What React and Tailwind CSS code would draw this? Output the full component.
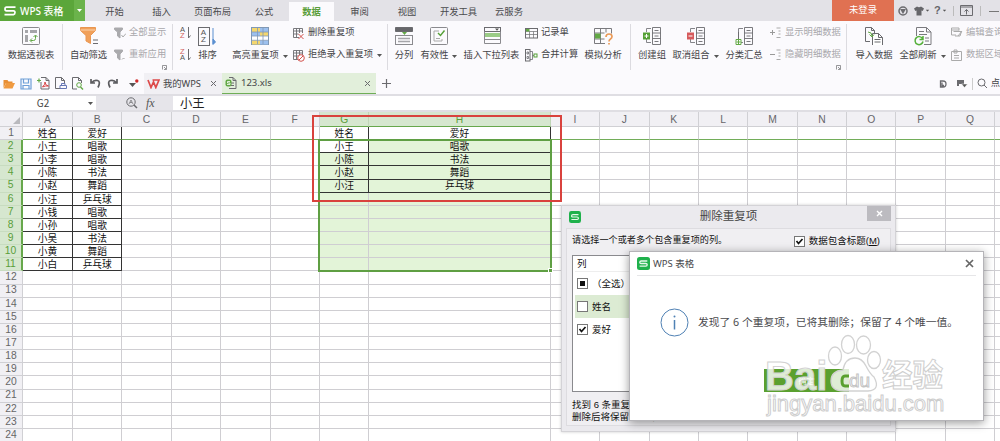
import clsx from "clsx";

const tabs = [
  { name: "开始", width: "w-[59px]" },
  { name: "插入", width: "w-[35px]" },
  { name: "页面布局", width: "w-[67px]" },
  { name: "公式", width: "w-[36px]" },
  { name: "数据", width: "ml-[7px] w-[45px]", active: true },
  { name: "审阅", width: "w-[51px]" },
  { name: "视图", width: "w-[44px]" },
  { name: "开发工具", width: "w-[59px]" },
  { name: "云服务", width: "w-[42px]" },
];

// The last column is only a sliver at the window's edge, so it has no letter
const columns = [..."ABCDEFGHIJKLMNOPQ".split(""), ""];
const rowCount = 24;

const people = [
  ["姓名", "爱好"],
  ["小王", "唱歌"],
  ["小李", "唱歌"],
  ["小陈", "书法"],
  ["小赵", "舞蹈"],
  ["小汪", "乒乓球"],
  ["小钱", "唱歌"],
  ["小孙", "唱歌"],
  ["小吴", "书法"],
  ["小黄", "舞蹈"],
  ["小白", "乒乓球"],
];

const uniquePeople = [
  ["姓名", "爱好"],
  ["小王", "唱歌"],
  ["小陈", "书法"],
  ["小赵", "舞蹈"],
  ["小汪", "乒乓球"],
];

function Svg({ w = 20, h = 20, className, children }) {
  return (
    <svg
      width={w}
      height={h}
      viewBox={`0 0 ${w} ${h}`}
      fill="none"
      stroke="#6b6b6f"
      className={clsx("shrink-0", className)}
    >
      {children}
    </svg>
  );
}

function WpsLogo({ size = 13 }) {
  return (
    <svg width={size} height={size} viewBox="0 0 13 13" className="shrink-0">
      <rect width="13" height="13" rx="2.5" fill="#1fb14c" />
      <path
        d="M10.3 4H4.2Q2.8 4 2.8 5.3T4.2 6.5H8.8Q10.2 6.5 10.2 7.8T8.8 9.2H2.6"
        fill="none"
        stroke="#e6f8ea"
        strokeWidth="1.3"
      />
    </svg>
  );
}

function Caret({ className }) {
  return (
    <svg width="5" height="3" viewBox="0 0 5 3" className={clsx("shrink-0", className)}>
      <path d="M0 0H5L2.5 3Z" fill="#555" />
    </svg>
  );
}

function PivotIcon() {
  return (
    <Svg>
      <rect x="1.5" y="1.5" width="17" height="17" rx="1" stroke="#8a8a8e" />
      <path d="M4 4h3v3H4zM9 4h7v3H9zM4 9h3v7H4z" fill="#a5a5a9" stroke="none" />
      <path d="M9.500 14.500h3q2 0 2-2V9.500M12.500 11l2-2 2 2M11 12.500l-2 2 2 2" stroke="#62a845" />
    </Svg>
  );
}

function FilterIcon() {
  return (
    <Svg>
      <path d="M1.500 1.500h15v3l-5 5v8L7 15V9.500L1.500 4.500Z" fill="#f1a05a" stroke="#e99650" />
      <path d="M1.500 4h15" stroke="#fbd4ae" />
      <path d="M14 14h5M14 17.500h5" strokeWidth="1.200" />
    </Svg>
  );
}

function SmallFilterIcon({ reapply }) {
  return (
    <Svg w={12} h={12}>
      <path d="M.5 1h8v1.500L6 5v6L3.500 9V5L.5 2.500Z" fill="#aaaaad" stroke="#aaaaad" />
      {reapply ? (
        <path d="M8 10.500l1.500-1.500 1 1" stroke="#aaa" />
      ) : (
        <path d="M7.500 8l1.500 2 3-3.500" stroke="#aaa" />
      )}
    </Svg>
  );
}

function SortIcon({ descending }) {
  return (
    <span className="flex h-4 w-[14px] items-center">
      <span className="flex flex-col text-[7.500px] leading-[6.500px]">
        <span className={descending ? "text-[#d2605c]" : "text-[#555]"}>{descending ? "Z" : "A"}</span>
        <span className={descending ? "text-[#555]" : "text-[#d2605c]"}>{descending ? "A" : "Z"}</span>
      </span>
      <Svg w={6} h={12}>
        <path d="M3.500 0v11M3.500 11l2-2.500" />
      </Svg>
    </span>
  );
}

function BigSortIcon() {
  return (
    <span className="flex h-5 w-5 items-center">
      <span className="flex h-[19px] w-3 flex-col items-center justify-center border border-[#6b6b6f] text-[8px] leading-[7.500px] text-[#555]">
        <span>A</span>
        <span>Z</span>
      </span>
      <Svg w={6} h={19}>
        <path d="M3 1v16M3 17.500V12l2.500 3Z" stroke="#5a8fd0" fill="#5a8fd0" />
      </Svg>
    </span>
  );
}

function HighlightIcon() {
  return (
    <Svg>
      <rect x="1.500" y="1.500" width="17" height="17" fill="#fff" stroke="#8098b5" />
      <path d="M2 2h8v4H2zM2 14.500h8v4H2zM10 6h8v4h-8z" fill="#f5d76e" stroke="none" />
      <path d="M2 6h8v4H2zM10 2h8v4h-8zM10 14.500h8v4h-8z" fill="#9cc0ee" stroke="none" />
      <path d="M2 6h16M2 10h16M2 14.300h16M7.500 2v16M13 2v16" stroke="#8098b5" strokeWidth=".8" />
    </Svg>
  );
}

function SmallTableIcon({ mark }) {
  return (
    <Svg w={13} h={13}>
      <path d="M7 10.500H1.500V1.500h9V6M1.500 4h9M1.500 7h5M4.500 1.500v9M7.500 1.500V6" strokeWidth=".9" />
      {mark === "delete" && <path d="M6.500 7l5 5M11.500 7l-5 5" stroke="#d2524e" />}
      {mark === "reject" && (
        <>
          <circle cx="9" cy="9" r="3.300" stroke="#d2524e" fill="#fff" />
          <path d="M7 11l4-4" stroke="#d2524e" />
        </>
      )}
    </Svg>
  );
}

function SplitIcon() {
  return (
    <Svg>
      <path d="M1.500 1.500h17v4h-17z" fill="#66666a" />
      <path d="M8 6h5l-2.500 3Z" fill="#62a845" stroke="none" />
      <rect x="1.500" y="9.500" width="17" height="9" stroke="#8a8a8e" />
      <path d="M4 12.500h12M4 15.500h12" stroke="#a5a5a9" strokeWidth="1.500" />
    </Svg>
  );
}

function ValidIcon() {
  return (
    <Svg>
      <rect x="1.500" y="1.500" width="17" height="17" rx="1" stroke="#8a8a8e" />
      <path d="M10 5H5v10h8v-2M7 12.500h4" stroke="#aaa" />
      <path d="M9 7l2.500 2.500 4-5" stroke="#55a036" strokeWidth="1.400" />
    </Svg>
  );
}

function DropListIcon() {
  return (
    <Svg>
      <rect x="2.500" y="1.500" width="16" height="4" />
      <path d="M13 2.500h4l-2 2.300Z" fill="#555" stroke="none" />
      <path d="M2.500 5.500v12h16v-12M3 13.500h15" stroke="#8a8a8e" />
      <path d="M3 7h15v4H3z" fill="#9acb86" stroke="none" />
    </Svg>
  );
}

function RecordIcon() {
  return (
    <Svg w={13} h={11}>
      <rect x=".5" y=".5" width="12" height="9.500" />
      <path d="M1 3.500h11M1 6.500h11M4.500 3.500v6.500M8.500 3.500v6.500" strokeWidth=".7" />
      <path d="M1 1h3.500v2.500H1z" fill="#62a845" stroke="none" />
    </Svg>
  );
}

function MergeIcon() {
  return (
    <Svg w={13} h={13}>
      <rect x=".5" y=".5" width="4.500" height="11.500" />
      <path d="M2 3h1.500v2H2zM2 7.500h1.500v2H2zM5 2.500h2.500v8H5M7.500 6.500H9" strokeWidth=".8" />
      <rect x="9" y="5" width="3" height="3" stroke="#55a036" />
    </Svg>
  );
}

function WhatIfIcon() {
  return (
    <Svg>
      <path d="M12 17.500H1.500V2.500h17v5M1.500 7h10M1.500 13h10M7.500 2.500v15M13 2.500v4" stroke="#7a7a7e" />
      <path d="M2 7.500h5.500v5H2z" fill="#62a845" stroke="none" />
      <path d="M13 11q0-3 3-3t3 2.500q0 1.500-1.500 2.500t-1.500 2.500M16 17v1.500" stroke="#ea9a58" strokeWidth="1.700" />
    </Svg>
  );
}

function GroupIcon({ kind }) {
  return (
    <Svg>
      <path d="M10.500 1.500h8v17h-8zM10.500 7h8M10.500 12.500h8M12.500 4.500h4M12.500 10h4M12.500 15.500h4" strokeWidth=".9" />
      <path d="M9 2.500H4.500V6M9 16.500H4.500V13" stroke="#85858a" />
      {kind === "add" && (
        <>
          <path d="M1 6.500h7v7H1z" fill="#55a036" stroke="none" />
          <path d="M4.500 8v4M2.500 10h4" stroke="#fff" />
        </>
      )}
      {kind === "remove" && (
        <>
          <path d="M1 6.500h7v7H1z" fill="#d65a5c" stroke="none" />
          <path d="M2.500 10h4" stroke="#fff" />
        </>
      )}
      {kind === "total" && (
        <>
          <path d="M4.500 6v7" />
          <path d="M2 13.500h5v5H2zM4.500 14v4M2.500 16h4" stroke="#62a845" fill="#fff" />
        </>
      )}
    </Svg>
  );
}

function DetailIcon({ plus }) {
  return (
    <Svg w={12} h={12}>
      <path d="M6.500 1h4M8.500 4h2M8.500 7h2M6.500 10.500h4" stroke="#aaa" />
      <path d={plus ? "M0 5.500h5M2.500 3v5" : "M0 5.500h5"} stroke="#999" />
    </Svg>
  );
}

function ImportIcon() {
  return (
    <Svg>
      <path d="M6 15.500H1.500V1.500h6l3 3V7M7.500 1.500v3h3" />
      <path d="M8.500 19V7.500h6l4 4V19M14.500 7.500v4h4M10.500 13.500h6M10.500 16h6" fill="#fff" />
      <path d="M4 6q4 0 4 4M5.500 8.500L8 11l2-2.500" stroke="#62a845" />
    </Svg>
  );
}

function RefreshIcon() {
  return (
    <Svg>
      <path d="M3.500 10V1.500h10l4.500 4.500v12.500h-7M13.500 1.500V6H18M6 5.500h5M6 8.500h8M12 12h4M12 15h4" stroke="#7a7a7e" />
      <path d="M9.500 12.500a4 4 0 1 0 .5 3M10 10v3.500H6.500" stroke="#55b03a" strokeWidth="1.500" />
    </Svg>
  );
}

function LauncherIcon({ className }) {
  return (
    <Svg w={5} h={5} className={className}>
      <path d="M.5 4.500V.5h4v4M2 2l2 2M2 4.500h2.500" strokeWidth=".7" />
    </Svg>
  );
}

function Tool({ icon, label, caret, className }) {
  return (
    <div className={clsx("flex shrink-0 flex-col items-center pt-[5px]", className)}>
      {icon}
      <div className="mt-1 flex h-3 items-center whitespace-nowrap">
        {label}
        {caret && <Caret className="ml-1" />}
      </div>
    </div>
  );
}

function SmallTool({ icon, label, caret, disabled }) {
  return (
    <div
      className={clsx(
        "flex h-3 items-center gap-[3px] whitespace-nowrap",
        disabled && "text-[#a9a8ac]"
      )}
    >
      {icon}
      <span>{label}</span>
      {caret && <Caret className="ml-px" />}
    </div>
  );
}

function ToolStack({ className, children }) {
  return (
    <div className={clsx("flex shrink-0 flex-col gap-[10px] pt-[6px]", className)}>{children}</div>
  );
}

function Group({ className, children }) {
  return (
    <div className={clsx("flex shrink-0 items-start", className)}>
      {children}
      <div className="ml-auto mt-[3px] h-[46px] w-px bg-[#dcdbe0]" />
    </div>
  );
}

function TitleBar() {
  return (
    <div className="flex h-[21px] bg-[#e3e2e7] text-[9.300px] text-[#4a4a4d]">
      <div className="flex w-[85px] shrink-0 items-center bg-[#5ba63a] text-white">
        <Svg w={12} h={10} className="ml-1">
          <path d="M11.500 1.200H2.500Q1 1.200 1 3t1.500 1.800H9.500Q11 4.800 11 6.600T9.500 8.600H.5" stroke="#fff" strokeWidth="1.700" />
        </Svg>
        <span className="ml-1 font-['Noto_Sans','Noto_Sans_CJK_SC',sans-serif] text-[10px] font-medium whitespace-nowrap">
          WPS 表格
        </span>
        <span className="ml-auto flex h-full w-[11px] items-center justify-center bg-[#6bb34b]">
          <svg width="5" height="3">
            <path d="M0 0H5L2.500 3Z" fill="#fff" />
          </svg>
        </span>
      </div>
      {tabs.map((tab) => (
        <div
          key={tab.name}
          className={clsx(
            "flex shrink-0 justify-center",
            tab.width,
            tab.active ? "mt-[2px] bg-[#fbfafd] pt-[6px] font-bold text-[#5a9e3a]" : "pt-[8px]"
          )}
        >
          {tab.name}
        </div>
      ))}
      <div className="ml-auto flex w-[62px] shrink-0 items-center justify-center bg-[#e07152] text-white">
        未登录
      </div>
      <div className="flex w-[106px] shrink-0 items-center pl-1">
        <Svg w={10} h={10}>
          <circle cx="5" cy="5" r="4" strokeWidth="1.500" />
          <path d="M2 3l6 0-3 5Z" fill="#6b6b6f" stroke="none" />
        </Svg>
        <Svg w={10} h={10} className="ml-[6px]">
          <path d="M0 2.500L3 .5q2 1.500 4 0l3 2-1.300 2.500-1.200-.5V9.500h-5V4.500L1.300 5Z" fill="#66666a" stroke="none" />
        </Svg>
        <Caret className="ml-px scale-75" />
        <span className="ml-[4px] text-[11px] font-bold text-[#66666a]">?</span>
        <Caret className="ml-px scale-75" />
        <span className="ml-[6px] h-[10px] w-px bg-[#bbb]" />
        <Svg w={13} h={11} className="ml-[6px]">
          <path d="M.5.5h12v10H.5zM.5 2h12M6.500 9.500V4.500M4.500 6.500l2-2 2 2" />
        </Svg>
        <span className="ml-[7px] h-[10px] w-px bg-[#bbb]" />
        <span className="ml-[8px] mt-[2px] h-px w-[10px] bg-[#777]" />
      </div>
    </div>
  );
}

function Ribbon() {
  return (
    <div className="flex h-[52px] overflow-hidden bg-[#fbfafd] text-[9.300px] text-[#444447]">
      <Group className="w-[63px]">
        <Tool className="w-[62px]" icon={<PivotIcon />} label="数据透视表" />
      </Group>
      <Group className="w-[110px]">
        <Tool className="w-[51px]" icon={<FilterIcon />} label="自动筛选" />
        <ToolStack>
          <SmallTool disabled icon={<SmallFilterIcon />} label="全部显示" />
          <SmallTool disabled icon={<SmallFilterIcon reapply />} label="重新应用" />
          <LauncherIcon className="-mt-[6px] ml-[48px]" />
        </ToolStack>
      </Group>
      <Group className="w-[215px]">
        <div className="flex w-5 shrink-0 flex-col gap-[6px] pt-[4px] pl-[7px]">
          <SortIcon />
          <SortIcon descending />
        </div>
        <Tool className="w-[29px]" icon={<BigSortIcon />} label="排序" />
        <Tool className="ml-[10px] w-[56px]" icon={<HighlightIcon />} label="高亮重复项" caret />
        <ToolStack className="ml-[4px]">
          <SmallTool icon={<SmallTableIcon mark="delete" />} label="删除重复项" />
          <SmallTool icon={<SmallTableIcon mark="reject" />} label="拒绝录入重复项" caret />
        </ToolStack>
      </Group>
      <Group className="w-[243px]">
        <Tool className="w-[32px]" icon={<SplitIcon />} label="分列" />
        <Tool className="w-[38px]" icon={<ValidIcon />} label="有效性" caret />
        <Tool className="ml-[5px] w-[57px]" icon={<DropListIcon />} label="插入下拉列表" />
        <ToolStack className="ml-[5px]">
          <SmallTool icon={<RecordIcon />} label="记录单" />
          <SmallTool icon={<MergeIcon />} label="合并计算" />
        </ToolStack>
        <Tool className="ml-[5px] w-[40px]" icon={<WhatIfIcon />} label="模拟分析" />
      </Group>
      <Group className="w-[216px]">
        <Tool className="ml-[4px] w-[34px]" icon={<GroupIcon kind="add" />} label="创建组" />
        <Tool className="ml-[3px] w-[47px]" icon={<GroupIcon kind="remove" />} label="取消组合" caret />
        <Tool className="ml-[4px] w-[42px]" icon={<GroupIcon kind="total" />} label="分类汇总" />
        <ToolStack className="ml-[5px]">
          <SmallTool disabled icon={<DetailIcon plus />} label="显示明细数据" />
          <SmallTool disabled icon={<DetailIcon />} label="隐藏明细数据" />
          <LauncherIcon className="-mt-[6px] ml-[66px]" />
        </ToolStack>
      </Group>
      <Tool className="ml-[4px] w-[46px]" icon={<ImportIcon />} label="导入数据" />
      <Tool className="ml-[2px] w-[47px]" icon={<RefreshIcon />} label="全部刷新" caret />
      <ToolStack className="ml-[4px]">
        <SmallTool
          disabled
          icon={
            <Svg w={13} h={12}>
              <path d="M9 3.500V1H1.500v7H6M1.500 3h7.500M3.500 4.500h8L10 9H5M8 9l4-5" stroke="#aaa" />
            </Svg>
          }
          label="编辑查询"
        />
        <SmallTool
          disabled
          icon={
            <Svg w={13} h={12}>
              <path d="M1.500 2.500h10v9h-10zM4 1h3v3H4zM4 6.500h5M4 9h5" stroke="#aaa" />
            </Svg>
          }
          label="数据区域"
        />
      </ToolStack>
    </div>
  );
}

function DocumentBar() {
  return (
    <div className="flex h-[21px] items-center bg-[#fbfafd] text-[9.300px] text-[#444447]">
      <div className="flex w-[144px] shrink-0 items-center gap-[5px] pl-[3px]">
        <Svg w={12} h={12}>
          <path d="M.5 10V2h4l1 1.500h4V5H3Z" fill="#e88f35" stroke="none" />
          <path d="M.5 10.500L3 5h9l-2.500 5.500Z" fill="#f09a40" stroke="none" />
        </Svg>
        <Svg w={12} h={12}>
          <path d="M1 1h10v10H1zM3.500 1v4h5V1M3 11V7.500h6V11" stroke="#6f9fd8" strokeWidth="1.200" />
        </Svg>
        <Svg w={13} h={13}>
          <path d="M4 .5h5l3 3v8.500H4V5M9 .5v3h3" />
          <path d="M5.500 10q3-3 2.500-5 0 3.500 3.500 4-3-.5-6 1" stroke="#d84545" />
          <path d="M0 3.500h4M2 1.500v4" stroke="#62a845" strokeWidth="1.200" />
        </Svg>
        <Svg w={12} h={13}>
          <path d="M5 11.500H.5V.5h6l3 3V6M6.500.5v3h3" />
          <path d="M5 8.500h6.500v3H5zM6.500 8.500v-2h3.500v2" stroke="#6777b5" />
        </Svg>
        <Svg w={12} h={13}>
          <path d="M5 12H.5V.5h6l3 3V6M6.500.5v3h3" />
          <circle cx="7" cy="8" r="2.300" stroke="#62a845" />
          <path d="M8.500 10l2.500 2.500" stroke="#62a845" strokeWidth="1.400" />
        </Svg>
        <Svg w={11} h={11} className="ml-px">
          <path d="M1 1v4h4M1.500 5Q4 1.500 7.500 2.500T8 9.500" strokeWidth="1.700" stroke="#5c5c60" />
        </Svg>
        <Svg w={11} h={11} className="ml-px">
          <path d="M10 1v4H6M9.500 5Q7 1.500 3.500 2.500T3 9.500" strokeWidth="1.700" stroke="#5c5c60" />
        </Svg>
        <Svg w={10} h={10} className="ml-[6px]">
          <path d="M0 4h7L3.500 8Z" fill="#555" stroke="none" />
          <circle cx="7.800" cy="2" r="1.700" fill="#cf2a2a" stroke="none" />
        </Svg>
      </div>
      <div className="flex h-full w-[78px] shrink-0 items-center bg-[#f1f0f4] pl-[3px]">
        <Svg w={13} h={10}>
          <path d="M1 1l3 7.500L6.500 3l2.300 5.500L12 1H5.500" stroke="#dd4a4a" strokeWidth="1.700" />
        </Svg>
        <span className="ml-[3px] font-['Noto_Sans','Noto_Sans_CJK_SC',sans-serif]">我的WPS</span>
        <Svg w={7} h={7} className="ml-auto mr-[5px]">
          <path d="M1 1l5 5M6 1l-5 5" />
        </Svg>
      </div>
      <div className="flex h-full w-[154px] shrink-0 items-center border-b border-[#6fae57] bg-[#e2efdb] pl-[3px]">
        <Svg w={12} h={12}>
          <path d="M4 .5h4l3 3v8H4M8 .5v3h3M6 6h3M6 8.500h3" />
          <rect x=".5" y="2.500" width="6" height="7" rx="2" fill="#62a845" stroke="none" />
          <path d="M5 4.500H2.500V6M2.500 6H5v1.500H2" stroke="#fff" strokeWidth=".8" />
        </Svg>
        <span className="ml-[4px] font-['Noto_Sans'] text-[9.500px]">123.xls</span>
        <Svg w={7} h={7} className="ml-auto mr-[5px]">
          <path d="M1 1l5 5M6 1l-5 5" />
        </Svg>
      </div>
      <Svg w={11} h={11} className="ml-[5px]">
        <path d="M5.500 1v9M1 5.500h9" strokeWidth="1.200" />
      </Svg>
      <div className="ml-auto flex items-center">
        <Svg w={8} h={8}>
          <path d="M1.500 1H4Q7 1 7 4T4 7H1.500ZM3 2.500v3h2" strokeWidth="1.300" />
        </Svg>
        <Svg w={11} h={9} className="ml-[10px]">
          <path d="M0 1h7v4H2v2H0z" fill="#6b6b6f" stroke="none" />
          <path d="M4.500 5h6L7.500 8.500Z" fill="#555" stroke="#fff" strokeWidth=".5" />
        </Svg>
        <span className="ml-[4px] h-[12px] w-px bg-[#ccc]" />
        <Svg w={11} h={11} className="ml-[4px]">
          <circle cx="4.500" cy="4.500" r="3.500" />
          <path d="M7 7l3 3" />
        </Svg>
        <span className="ml-[3px]">点</span>
      </div>
    </div>
  );
}

function FormulaBar() {
  return (
    <div className="flex h-[18px] border-y-2 border-[#dfdee3] bg-[#e6e5ea]">
      <div className="flex w-24 shrink-0 items-center bg-white pr-[3px]">
        <span className="w-[86px] text-center font-['Noto_Sans_CJK_SC'] text-[10px] text-[#444]">G2</span>
        <Caret className="ml-auto" />
      </div>
      <div className="flex w-[77px] shrink-0 items-center pl-[30px]">
        <Svg w={12} h={12}>
          <circle cx="5" cy="5" r="4.200" />
          <path d="M8 8l3 3" strokeWidth="1.500" />
          <path d="M3 7l2-4 2 4M4 5.500h2" strokeWidth=".7" />
        </Svg>
        <span className="ml-[8px] font-['Liberation_Serif'] text-[12px] leading-none text-[#555] italic">fx</span>
      </div>
      <div className="flex grow items-center bg-white pt-[2px] pl-[7px] text-[12.300px] text-[#222]">小王</div>
    </div>
  );
}

function getColumnWidth(column) {
  if (column === "A") return "w-[50px]";
  if (column === "H") return "w-[181.4px]";
  return "w-[49.4px]";
}

function SheetRow({ number }) {
  const rowSelected = number >= 2 && number <= 11;

  return (
    <div className="flex h-[13.130px]">
      <div
        className={clsx(
          "flex w-[23px] shrink-0 items-center justify-center border-r border-b text-[10.300px]",
          rowSelected
            ? "border-r-2 border-r-[#67a84c] border-b-[#c8dcc0] bg-[#d6e7cf] text-[#5a9e3a]"
            : "border-[#d0d0d4] bg-[#f1f0f4] text-[#666]"
        )}
      >
        {number}
      </div>
      {columns.map((column, index) => {
        let text = "";
        if (column === "A" || column === "B") {
          text = people[number - 1]?.[column === "A" ? 0 : 1];
        } else if (column === "G" || column === "H") {
          text = uniquePeople[number - 1]?.[column === "G" ? 0 : 1];
        }
        const inSelection = rowSelected && (column === "G" || column === "H");
        const activeCell = column === "G" && number === 2;

        return (
          <div
            key={index}
            className={clsx(
              "flex shrink-0 items-center justify-center border-r border-b pt-[1.500px] text-[9.700px] whitespace-nowrap",
              getColumnWidth(column),
              text ? "border-[#333] text-[#111]" : "border-[#cfced2]",
              !text && inSelection && "border-[#b9c9b0]",
              inSelection && !activeCell ? "bg-[#e3f4d8]" : "bg-white",
              number === 1 && "border-b-[#72ad59]"
            )}
          >
            {text}
          </div>
        );
      })}
    </div>
  );
}

function Sheet() {
  return (
    <div className="relative">
      <div className="flex h-[15px] text-[10.300px] text-[#66666a]">
        <div className="flex w-[23px] shrink-0 items-end justify-end border-r border-b border-[#d0d0d4] bg-[#f1f0f4] p-[2px]">
          <svg width="7" height="7">
            <path d="M7 0V7H0Z" fill="#b9b9bd" />
          </svg>
        </div>
        {columns.map((column, index) => (
          <div
            key={index}
            className={clsx(
              "flex shrink-0 items-center justify-center border-r border-b pt-[2px]",
              getColumnWidth(column),
              column === "G" || column === "H"
                ? "border-r-[#c0d5b7] border-b-[#67a84c] bg-[#d6e7cf] text-[#5a9e3a]"
                : "border-[#d0d0d4] bg-[#f1f0f4]"
            )}
          >
            {column}
          </div>
        ))}
      </div>
      {Array.from({ length: rowCount }, (_, index) => (
        <SheetRow key={index} number={index + 1} />
      ))}

      {/* Selected range G2:H11 */}
      <div className="absolute top-[27px] left-[318px] h-[133px] w-[234px] border-2 border-[#5f9f43]">
        <div className="absolute -right-[3px] -bottom-[3px] h-[5px] w-[5px] border border-white bg-[#5f9f43]" />
      </div>
      <div className="absolute top-[3px] left-[312px] h-[87px] w-[250px] border-2 border-[#d9423d]" />
    </div>
  );
}

function CheckBox({ state }) {
  return (
    <svg width="11" height="11" viewBox="0 0 11 11" className="shrink-0">
      <rect x=".5" y=".5" width="10" height="10" fill="#fff" stroke="#777" />
      {state === "partial" && <rect x="3" y="3" width="5" height="5" fill="#111" />}
      {state === "checked" && <path d="M2.500 5l2 2.500 4-4.500" fill="none" stroke="#111" strokeWidth="1.700" />}
    </svg>
  );
}

function DuplicatesDialog() {
  return (
    <div className="absolute top-[205px] left-[561px] flex h-[227px] w-[335px] flex-col border border-[#d4d3d7] bg-[#ebeaee] px-1 pb-[5px] text-[9.500px] text-[#111] shadow-[0_0_3px_#0003]">
      <div className="flex h-[22px] shrink-0 items-center pl-[3px]">
        <WpsLogo size={12} />
        <span className="grow pl-[9px] text-center text-[11.500px] text-[#444]">删除重复项</span>
        <span className="flex h-[15px] w-[24px] items-center justify-center self-start bg-[#bcbbc0]">
          <svg width="7" height="7">
            <path d="M1 1l5 5M6 1l-5 5" stroke="#fff" strokeWidth="1.400" />
          </svg>
        </span>
      </div>
      <div className="flex grow flex-col border border-[#dddce0] bg-[#f0eff2] px-[5px] pt-[5px]">
        <div className="flex h-[14px] items-center">
          <span className="text-[9.150px]">请选择一个或者多个包含重复项的列。</span>
          <span className="ml-auto flex items-center gap-[3px] pr-[5px] whitespace-nowrap">
            <CheckBox state="checked" />
            <span className="ml-px">
              数据包含标题(<u>M</u>)
            </span>
          </span>
        </div>
        <div className="mt-[7px] h-[137px] shrink-0 border border-[#8a8a8e] bg-white px-[2px]">
          <div className="flex h-4 items-center border-b border-[#eee] pl-[2px]">列</div>
          <div className="flex h-[23px] items-center gap-[4px] pl-[2px]">
            <CheckBox state="partial" />
            （全选）
          </div>
          <div className="flex h-[23px] items-center gap-[4px] bg-[#dcebd3] pl-[2px]">
            <CheckBox />
            姓名
          </div>
          <div className="flex h-[23px] items-center gap-[4px] pl-[2px]">
            <CheckBox state="checked" />
            爱好
          </div>
        </div>
        <div className="mt-[7px] leading-[11.500px]">
          <div>找到 6 条重复项；</div>
          <div>删除后将保留 4 条唯一项。</div>
        </div>
      </div>
    </div>
  );
}

function MessageDialog() {
  return (
    <div className="absolute top-[251px] left-[629px] flex h-[170px] w-[355px] flex-col border border-[#b5b4b8] bg-white px-[7px] font-['Noto_Sans','Noto_Sans_CJK_SC',sans-serif] text-[#4a4a4d] shadow-[0_2px_9px_#0006]">
      <div className="flex h-[24px] shrink-0 items-center border-b border-[#e6e6e8] text-[9.500px]">
        <WpsLogo />
        <span className="ml-[3px]">WPS 表格</span>
        <svg width="9" height="9" className="mr-[2px] ml-auto">
          <path d="M1 1l7 7M8 1l-7 7" stroke="#666" strokeWidth="1.700" />
        </svg>
      </div>
      <div className="mt-[31px] flex h-[30px] items-center pl-[23px]">
        <svg width="29" height="29" viewBox="0 0 29 29" className="shrink-0" fill="none" stroke="#4f81b4">
          <circle cx="14.500" cy="14.500" r="13.500" />
          <path d="M14.500 12v9.500" strokeWidth="1.500" />
          <circle cx="14.500" cy="8.500" r="1" fill="#4f81b4" stroke="none" />
        </svg>
        <span className="ml-[9px] text-[10.750px] whitespace-nowrap">
          发现了 6 个重复项，已将其删除；保留了 4 个唯一值。
        </span>
      </div>
      <button className="mt-[32px] ml-[127px] h-[23px] w-[85px] bg-[#5aa02f] text-[8px] text-white">
        确定
      </button>
    </div>
  );
}

function Watermark() {
  return (
    <div className="absolute top-[330px] left-[765px] h-[92px] w-[185px] font-bold text-white/80">
      <svg width="185" height="92" viewBox="0 0 185 92" fill="#fff" fillOpacity=".8" stroke="#d2d2d2" strokeWidth="1.300">
        <ellipse cx="83" cy="14.500" rx="6.500" ry="9" />
        <ellipse cx="98.500" cy="15" rx="7" ry="9" />
        <ellipse cx="70" cy="26" rx="6.500" ry="9" />
        <ellipse cx="109" cy="30" rx="6.500" ry="8.500" />
        <path d="M90 28q7 0 11 8t8 11q7 13-6 14H79q-13 0-13-10t12-11q2-12 12-12Z" />
        <path d="M84 46h-4q-3 0-3 5t3 5h4" stroke="#5aa02f" strokeWidth="3" fill="none" />
      </svg>
      <span className="absolute top-[26px] left-0 font-['Liberation_Sans'] text-[40px] leading-[40px] [-webkit-text-stroke:1px_#d2d2d2]">
        Bai
      </span>
      <span className="absolute top-[41px] left-[84px] font-['Liberation_Sans'] text-[19px] leading-[19px] font-normal [-webkit-text-stroke:1px_#c4c4c4]">
        du
      </span>
      <span className="absolute top-[29px] left-[117px] text-[30.500px] leading-[32px] whitespace-nowrap [-webkit-text-stroke:1px_#cecece]">
        经验
      </span>
      <span className="absolute top-[63px] left-[2px] font-['Liberation_Sans'] text-[22px] leading-[22px] font-normal [-webkit-text-stroke:1px_#cdcdcd]">
        jingyan.baidu.com
      </span>
    </div>
  );
}

export default function App() {
  return (
    <div className="relative h-[441px] w-[1000px] overflow-hidden bg-white font-['Liberation_Sans','Noto_Sans_CJK_SC',sans-serif] leading-none">
      <TitleBar />
      <Ribbon />
      <DocumentBar />
      <FormulaBar />
      <Sheet />
      <DuplicatesDialog />
      <MessageDialog />
      <Watermark />
    </div>
  );
}
